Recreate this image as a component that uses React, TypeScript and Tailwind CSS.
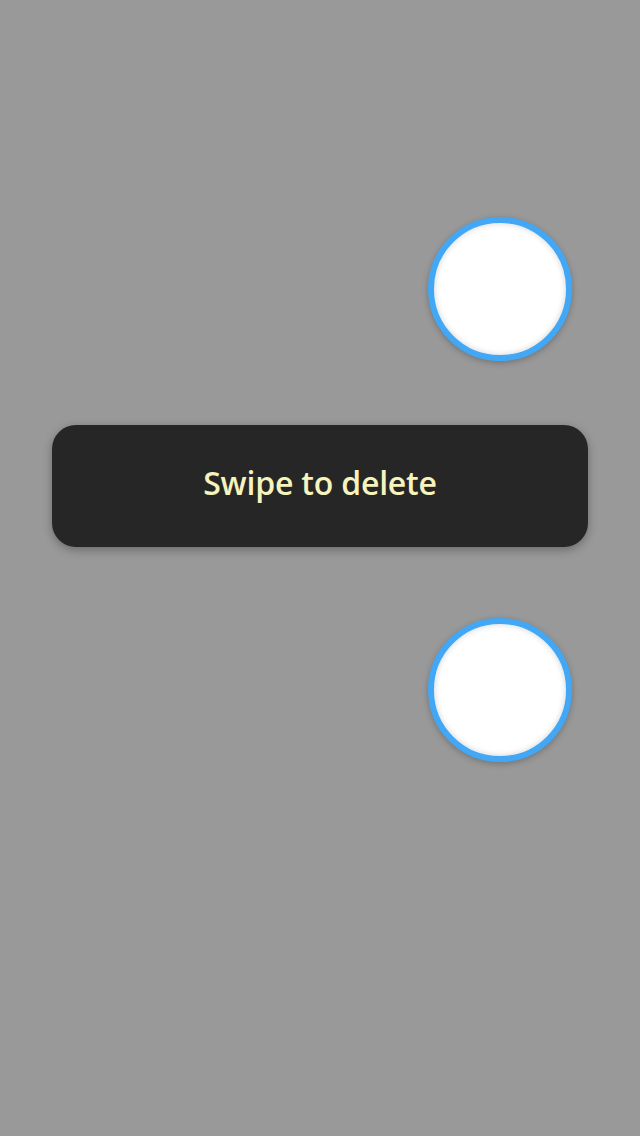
export default function App() {
  return (
    <div className="w-[640px] h-[1136px] bg-[#999999] flex flex-col overflow-hidden">
      <div className="flex justify-end pr-[68px] pt-[217px]">
        <div className="w-[144px] h-[144px] rounded-full bg-white border-[6px] border-[#42a8f5] shadow-[0_2px_6px_rgba(0,0,0,0.25),inset_0_0_6px_rgba(0,0,0,0.18)]" />
      </div>
      <div className="mx-[52px] mt-[64px] h-[122px] pb-[6px] rounded-[24px] bg-[#262626] shadow-[0_3px_10px_rgba(0,0,0,0.3)] flex items-center justify-center">
        <span className="text-[32px] font-semibold text-[#f7f3bd] font-['Open_Sans',sans-serif] tracking-[-0.2px]">
          Swipe to delete
        </span>
      </div>
      <div className="flex justify-end pr-[68px] mt-[71px]">
        <div className="w-[144px] h-[144px] rounded-full bg-white border-[6px] border-[#42a8f5] shadow-[0_2px_6px_rgba(0,0,0,0.25),inset_0_0_6px_rgba(0,0,0,0.18)]" />
      </div>
    </div>
  )
}
